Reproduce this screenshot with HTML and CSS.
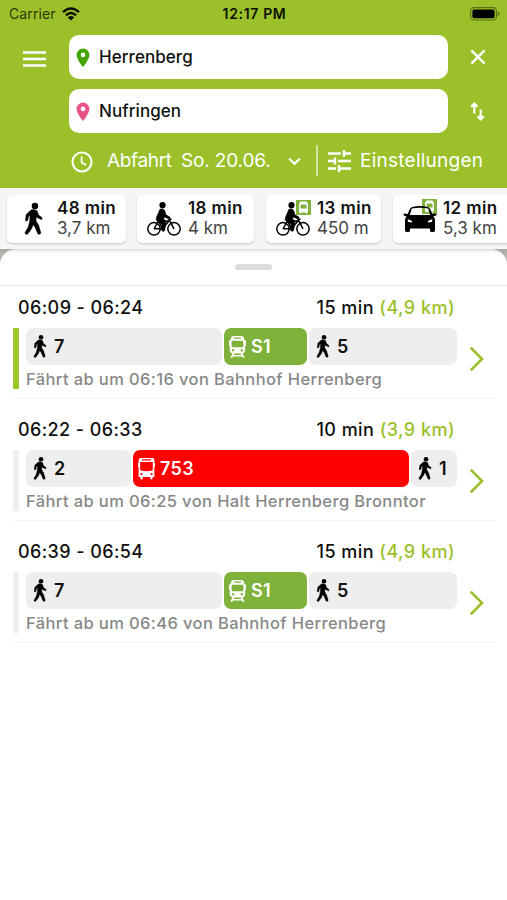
FILE: index.html
```html
<!DOCTYPE html>
<html lang="de">
<head>
<meta charset="utf-8">
<title>Verbindungen</title>
<link rel="stylesheet" href="styles.css">
</head>
<body>
<svg class="defs" width="0" height="0">
  <symbol id="walk" viewBox="0 0 20 34">
    <circle cx="11.5" cy="3.4" r="3.4"/>
    <path stroke="currentColor" stroke-width=".7" stroke-linejoin="round" d="M7.6 7.4Q11 6.6 13.6 8.2L15.4 13 18.9 15.6Q19.6 17 18.2 17.4L13.8 15.4 12.9 14.4 12.5 19 15.2 23.4 17.6 31.4Q17.2 33.6 14.8 32.8L11.6 25.4 9.4 22.8 8 27 3.6 33Q1.4 33.6 1.1 31.4L4.6 25.4 6.2 19 6.4 12.8 4.8 14.2 3.8 18.6Q2.4 19.8 1.6 18.4L2.4 12.2Z"/>
  </symbol>
  <symbol id="bike" viewBox="0 0 34 34">
    <circle cx="15.5" cy="3.2" r="3.1"/>
    <g fill="none" stroke="currentColor" stroke-width="1.5">
      <circle cx="7" cy="26.8" r="6.2"/><circle cx="27" cy="26.8" r="6.2"/>
      <path d="M7 26.8 11.5 19H22L15.5 26.8H7M11.5 19 15.5 26.8M27 26.8 22 17.2H24.6"/>
    </g>
    <path stroke="currentColor" stroke-width=".7" stroke-linejoin="round" d="M13 7.2Q16.6 6.2 17.8 8.8L18.8 12.7 23 15.2Q23.4 17 21.6 16.8L17.2 15 16.6 16.6 19 19.8 17.6 28.6Q16.2 30 14.8 28.6L15 22.2 10.4 19.4Q8.6 17.8 9.6 15.2Z"/>
  </symbol>
  <symbol id="car" viewBox="0 0 34 26">
    <path fill-rule="evenodd" d="M8.6 1.2Q17-1 25.4 1.2Q27 1.8 28 4.8L29.2 8 32.8 7.4Q34.4 8.4 32.6 9.8L30.4 10.6Q32 12.4 32 15V24.4Q31.8 26 30 26H28.6Q27 26 27 24.4V22.4H7V24.4Q7 26 5.4 26H4Q2.2 26 2 24.4V15Q2 12.4 3.6 10.6L1.4 9.8Q-.4 8.4 1.2 7.4L4.8 8 6 4.8Q7 1.8 8.6 1.2ZM8.8 2.6 6.8 9H27.2L25.2 2.6Q17 .8 8.8 2.6ZM4.6 13.2 5 16 9.2 16.6Q9.4 14.2 4.6 13.2ZM29.4 13.2 29 16 24.8 16.6Q24.6 14.2 29.4 13.2Z"/>
  </symbol>
  <symbol id="train" viewBox="0 0 17 22">
    <path fill-rule="evenodd" d="M4.5 0H12.5Q14.5 0 15 2L15.6 4.6H17V10H16.2V14.6Q16 17 13.6 17.4L15.6 21.8H13.6L13 20.6H4L3.4 21.8H1.4L3.4 17.4Q1 17 .8 14.6V10H0V4.6H1.4L2 2Q2.5 0 4.5 0ZM5 1.6V2.8H12V1.6ZM3.6 4.8Q2.6 5 2.6 6V10Q2.6 11.2 3.8 11.2H13.2Q14.4 11.2 14.4 10V6Q14.4 5 13.4 4.8ZM4.2 13A1.2 1.2 0 1 0 4.2 15.4 1.2 1.2 0 1 0 4.2 13ZM12.8 13A1.2 1.2 0 1 0 12.8 15.4 1.2 1.2 0 1 0 12.8 13ZM5.2 17.6 4.8 18.9H12.2L11.8 17.6Z"/>
  </symbol>
  <symbol id="bus" viewBox="0 0 17 22">
    <path fill-rule="evenodd" d="M2.4 0H14.6Q16.4 0 16.4 2V5H17V9H16.4V19H14.6V20.4Q14.4 21.4 13.4 21.4 12.2 21.4 12.2 20.4V19H4.8V20.4Q4.8 21.4 3.6 21.4 2.4 21.4 2.4 20.4V19H.6V9H0V5H.6V2Q.6 0 2.4 0ZM4 1.2V2.4H13V1.2ZM2.2 4V12.2Q8.5 14.4 14.8 12.2V4ZM3.4 15A1.1 1.1 0 1 0 3.4 17.2 1.1 1.1 0 1 0 3.4 15ZM13.6 15A1.1 1.1 0 1 0 13.6 17.2 1.1 1.1 0 1 0 13.6 15Z"/>
  </symbol>
  <symbol id="pin" viewBox="0 0 14 20">
    <path fill-rule="evenodd" d="M7 .5A6.4 6.4 0 0 0 .6 7C.6 11.5 7 19 7 19S13.4 11.5 13.4 7A6.4 6.4 0 0 0 7 .5ZM7 4.6A2.3 2.3 0 1 1 7 9.2 2.3 2.3 0 1 1 7 4.6Z"/>
  </symbol>
  <symbol id="chevron" viewBox="0 0 14 24">
    <path d="M1.5 1.5 12 12 1.5 22.5" fill="none" stroke="currentColor" stroke-width="2.6" stroke-linecap="round"/>
  </symbol>
</svg>

<header class="header">
  <div class="status">
    <div class="carrier"><span>Carrier</span>
      <svg class="wifi" viewBox="0 0 18 14"><g fill="none" stroke="currentColor" stroke-width="2.3"><path d="M1 5.2Q9-2.2 17 5.2"/><path d="M4 8.3Q9 3.6 14 8.3"/></g><path d="M9 13.6 5.8 10.4Q9 7.8 12.2 10.4Z"/></svg>
    </div>
    <span class="clock">12:17 PM</span>
    <svg class="battery" viewBox="0 0 30 14"><rect x=".6" y=".6" width="25.8" height="12.4" rx="3.4" fill="none" stroke="#59701a" stroke-width="1.1"/><rect x="2.4" y="2.4" width="22.2" height="8.8" rx="1.6"/><path d="M27.6 4.4Q29.6 5 29.6 6.8T27.6 9.2Z" fill="#59701a"/></svg>
  </div>
  <div class="search">
    <svg class="menu" viewBox="0 0 23 16"><path d="M0 1.5H23M0 8H23M0 14.5H23" stroke="currentColor" stroke-width="2.4"/></svg>
    <div class="field from"><svg class="pin"><use href="#pin"/></svg><span>Herrenberg</span></div>
    <svg class="close" viewBox="0 0 16 16"><path d="M1.4 1.4 14.6 14.6M14.6 1.4 1.4 14.6" stroke="currentColor" stroke-width="2.4"/></svg>
    <div class="field to"><svg class="pin"><use href="#pin"/></svg><span>Nufringen</span></div>
    <svg class="swap" viewBox="0 0 14 18"><path d="M4 11V2M1 4.6 4 1.6 7 4.6M10 7V16M7 13.4 10 16.4 13 13.4" fill="none" stroke="currentColor" stroke-width="2.1"/></svg>
  </div>
  <div class="options">
    <svg class="time" viewBox="0 0 22 22"><circle cx="11" cy="11" r="9.5" fill="none" stroke="currentColor" stroke-width="2.1"/><path d="M10.6 5.4V11.4L15.2 14" fill="none" stroke="currentColor" stroke-width="1.8"/></svg>
    <span class="depart">Abfahrt</span><span class="date">So. 20.06.</span>
    <svg class="down" viewBox="0 0 12 8"><path d="M1 1.2 6 6.2 11 1.2" fill="none" stroke="currentColor" stroke-width="2"/></svg>
    <i class="divider"></i>
    <svg class="tune" viewBox="0 0 24 22"><path d="M0 3.4H13M16 3.4H23M16 0V6.8M0 11H7M10 11H23M7 7.6V14.4M0 18.6H8M11 18.6H23M11 15.2V22" fill="none" stroke="currentColor" stroke-width="2.5"/></svg>
    <span class="settings">Einstellungen</span>
  </div>
</header>

<nav class="modes">
  <div class="mode m1"><svg class="i-walk"><use href="#walk"/></svg><div class="info"><b>48 min</b><span>3,7 km</span></div></div>
  <div class="mode m2"><svg class="i-bike"><use href="#bike"/></svg><div class="info"><b>18 min</b><span>4 km</span></div></div>
  <div class="mode m3"><div class="combo"><svg class="tag" viewBox="0 0 15 15"><rect width="15" height="15" fill="#7fb23a"/><path fill="#fff" fill-rule="evenodd" d="M4.5 1.5H10.5L12 4V11.5L11 13.5H9.8L9.4 12.6H5.6L5.2 13.5H4L3 11.5V4ZM4.5 4.5V8.5H10.5V4.5Z"/></svg><svg class="i-bike"><use href="#bike"/></svg></div><div class="info"><b>13 min</b><span>450 m</span></div></div>
  <div class="mode m4"><div class="combo"><svg class="tag" viewBox="0 0 15 15"><rect width="15" height="15" fill="#7fb23a"/><path fill="#fff" fill-rule="evenodd" d="M4.5 1.5H10.5L12 4V11.5L11 13.5H9.8L9.4 12.6H5.6L5.2 13.5H4L3 11.5V4ZM4.5 4.5V8.5H10.5V4.5Z"/></svg><svg class="i-car"><use href="#car"/></svg></div><div class="info"><b>12 min</b><span>5,3 km</span></div></div>
</nav>

<div class="backdrop">
<main class="sheet">
  <div class="grip"><i></i></div>
  <section class="trip active">
    <div class="head"><span class="times">06:09 - 06:24</span><span class="dur">15 min <em>(4,9 km)</em></span></div>
    <div class="body"><i class="stripe"></i>
      <div class="detail">
        <div class="legs legs-s"><div class="leg"><svg class="w"><use href="#walk"/></svg>7</div><div class="leg rail"><svg class="v"><use href="#train"/></svg>S1</div><div class="leg"><svg class="w"><use href="#walk"/></svg>5</div></div>
        <p>Fährt ab um 06:16 von Bahnhof Herrenberg</p>
      </div>
      <svg class="go"><use href="#chevron"/></svg>
    </div>
  </section>
  <section class="trip">
    <div class="head"><span class="times">06:22 - 06:33</span><span class="dur">10 min <em>(3,9 km)</em></span></div>
    <div class="body"><i class="stripe"></i>
      <div class="detail">
        <div class="legs legs-b"><div class="leg"><svg class="w"><use href="#walk"/></svg>2</div><div class="leg bus"><svg class="v"><use href="#bus"/></svg>753</div><div class="leg"><svg class="w"><use href="#walk"/></svg>1</div></div>
        <p>Fährt ab um 06:25 von Halt Herrenberg Bronntor</p>
      </div>
      <svg class="go"><use href="#chevron"/></svg>
    </div>
  </section>
  <section class="trip">
    <div class="head"><span class="times">06:39 - 06:54</span><span class="dur">15 min <em>(4,9 km)</em></span></div>
    <div class="body"><i class="stripe"></i>
      <div class="detail">
        <div class="legs legs-s"><div class="leg"><svg class="w"><use href="#walk"/></svg>7</div><div class="leg rail"><svg class="v"><use href="#train"/></svg>S1</div><div class="leg"><svg class="w"><use href="#walk"/></svg>5</div></div>
        <p>Fährt ab um 06:46 von Bahnhof Herrenberg</p>
      </div>
      <svg class="go"><use href="#chevron"/></svg>
    </div>
  </section>
</main>
</div>
</body>
</html>
```
FILE: styles.css
```css
* { box-sizing: border-box; }
body { margin: 0; width: 507px; height: 900px; overflow: hidden; display: flex; flex-direction: column; background: #fff; color: #111; font-family: Inter, sans-serif; }
svg { display: block; flex: none; fill: currentColor; }
.defs { position: absolute; }
span, b { white-space: nowrap; }

.header { height: 188px; flex: none; background: #9bc02a; color: #fff; }
.status { height: 27px; display: grid; grid-template-columns: 1fr auto 1fr; align-items: center; padding: 0 7px 0 9px; color: #0c1000; }
.carrier { display: flex; align-items: center; gap: 6px; font-size: 14px; letter-spacing: .1px; color: #2b3708; }
.wifi { width: 18px; height: 14px; color: #0c1000; }
.clock { font-size: 14px; font-weight: 600; letter-spacing: .65px; }
.battery { width: 30px; height: 14px; justify-self: end; color: #000; }

.search { display: grid; grid-template-columns: 69px 379px 59px; grid-template-rows: 44px 44px; row-gap: 10px; padding-top: 8px; align-items: center; justify-items: center; }
.menu { width: 23px; height: 16px; margin-top: 4px; }
.field { width: 379px; height: 44px; background: #fff; border-radius: 10px; display: flex; align-items: center; gap: 9px; padding-left: 7px; font-size: 17px; font-weight: 500; letter-spacing: .06px; color: #111; }
.field.to { grid-column: 2; }
.pin { width: 14px; height: 20px; margin-top: 2px; }
.from .pin { color: #45a500; }
.to .pin { color: #ea5388; }
.close { width: 16px; height: 16px; }
.swap { width: 15px; height: 19px; }

.options { height: 55px; display: flex; align-items: center; padding-left: 71px; font-size: 19px; }
.time { width: 22px; height: 22px; margin: 3px 14px 0 0; }
.depart { width: 64px; letter-spacing: -.35px; }
.date { width: 89px; margin-left: 10px; letter-spacing: -.15px; }
.down { width: 13px; height: 9px; margin: 2px 15px 0 18px; }
.divider { width: 2px; height: 31px; background: #d6e5a6; }
.tune { width: 24px; height: 22px; margin: 0 8px 0 10px; }
.settings { letter-spacing: .25px; }

.modes { height: 61px; flex: none; display: flex; gap: 12px; padding: 7px 0 0 7px; background: #f5f5f5; overflow: hidden; }
.mode { height: 48px; flex: none; background: #fff; border-radius: 5px; box-shadow: 0 1px 2px rgba(0,0,0,.2); display: flex; align-items: center; }
.info { margin-top: -2px; }
.mode b, .mode span { display: block; line-height: 20.5px; font-size: 17px; }
.mode b { font-weight: 600; letter-spacing: .4px; }
.mode span { color: #444; }
.m1 { width: 119px; padding-left: 17px; gap: 14px; }
.m2 { width: 117px; padding-left: 10px; gap: 7px; margin-left: -1px; }
.m3 { width: 115px; padding-left: 10px; gap: 7px; }
.m4 { width: 120px; padding-left: 10px; gap: 6px; }
.i-walk { width: 19px; height: 34px; color: #000; }
.i-bike { width: 34px; height: 34px; margin-top: -1px; color: #000; }
.i-car { width: 34px; height: 26px; color: #000; position: relative; }
.combo { position: relative; }
.combo .i-bike { position: relative; }
.tag { position: absolute; right: -1px; top: -3px; width: 15px; height: 15px; }
.m4 .tag { top: -7px; right: 0; }

.backdrop { flex: 1; background: linear-gradient(#aaaaa2, #c8c8c2 16px); }
.sheet { height: 100%; background: linear-gradient(#dedede, #fff 4px); border-radius: 16px 16px 0 0; }
.grip { height: 37px; border-bottom: 1px solid #ececec; display: flex; justify-content: center; padding-top: 15px; }
.grip i { width: 37px; height: 6px; border-radius: 3px; background: #ddd; }

.trip { margin: 0 12px 0 13px; height: 122px; border-bottom: 1px solid #f3f3f3; }
.trip.active { height: 113px; }
.head { height: 51px; padding: 20px 40px 0 5px; display: flex; justify-content: space-between; font-size: 18px; line-height: 22px; font-weight: 500; }
.times { letter-spacing: .4px; }
.dur { letter-spacing: .46px; }
.active .head { height: 42px; padding-top: 11px; }
.head em { font-style: normal; color: #9bc02a; }
.body { display: flex; height: 61px; }
.stripe { width: 6px; background: #efefef; }
.active .stripe { background: #9bc92a; }
.detail { width: 431px; margin-left: 7px; }
.legs { display: grid; height: 37px; column-gap: 2px; }
.legs-s { grid-template-columns: 196px 83px 148px; }
.legs-b { grid-template-columns: 105px 276px 46px; }
.leg { display: flex; align-items: center; background: #eee; border-radius: 7px; padding-left: 7px; gap: 7px; font-size: 18px; font-weight: 600; }
.rail, .bus { color: #fff; padding-left: 5px; gap: 5px; letter-spacing: .4px; }
.rail { background: #7fb23a; }
.bus { background: #f00; }
.w { width: 14px; height: 23px; color: #000; }
.v { width: 17px; height: 22px; }
.detail p { margin: 3px 0 0; font-size: 16.5px; line-height: 22px; font-weight: 500; letter-spacing: .39px; color: #888; white-space: nowrap; }
.go { width: 14px; height: 24px; margin: 19px 0 0 13px; color: #9bc02a; }
```
